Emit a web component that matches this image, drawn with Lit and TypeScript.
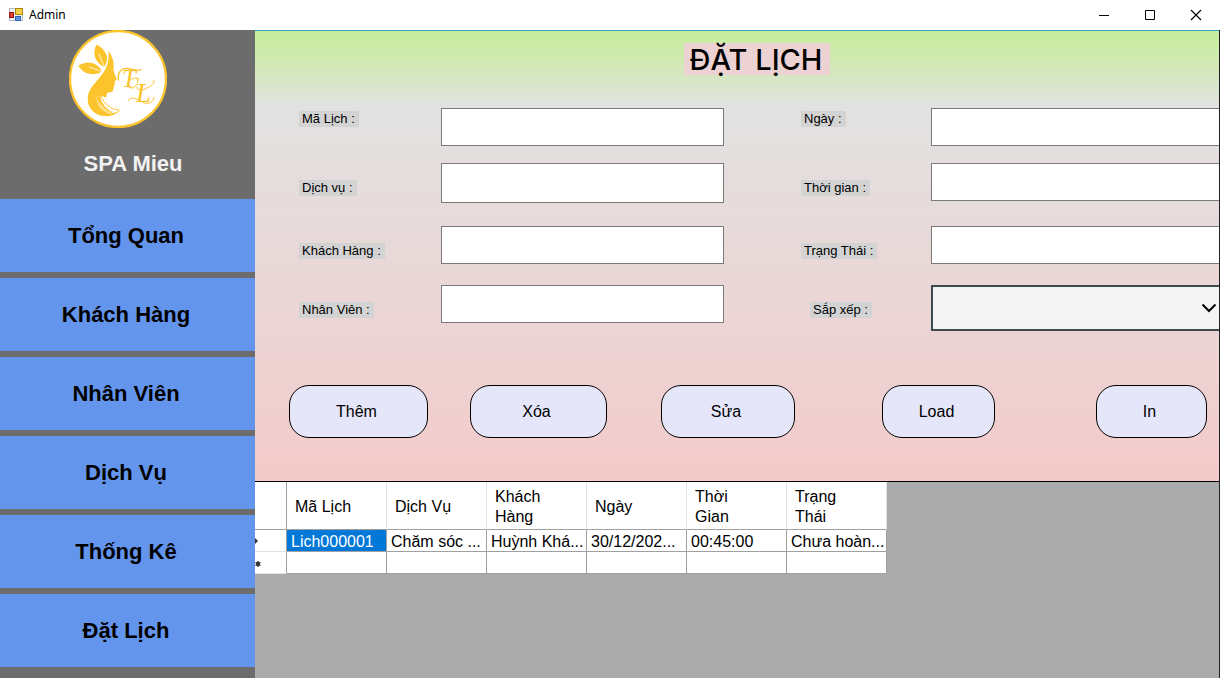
import { LitElement, html, css } from "lit";
import { customElement, state } from "lit/decorators.js";

@customElement("spa-logo")
class SpaLogo extends LitElement {
  static styles = css`
    :host { display: block; width: 98px; height: 98px; }
    svg { display: block; width: 100%; height: 100%; }
    .mono { font-family: "Liberation Serif", serif; font-style: italic; fill: #fcc42c; }
  `;
  render() {
    return html`
      <svg viewBox="0 0 98 98" role="img" aria-label="SPA Mieu logo">
        <circle cx="49" cy="49" r="48" fill="#fff" stroke="#fcc42c" stroke-width="2.4" />
        <g fill="#fcc42c">
          <path d="M27.5 14.5C23.5 22 24.5 32 35.5 37C41 29 37.5 19.5 27.5 14.5Z" />
          <path d="M9.3 36C15.5 30.5 28 30.5 33 41.5C24 47 14 43.5 9.3 36Z" />
          <path d="M39.3 20.7C43 25 45 31 44.6 36.5C44.3 40 45 42.5 46 45C47.2 47.6 48 49 47.3 50C46.6 50.7 45.8 50.8 45.6 51.5C45.8 52.6 46.3 53.2 45.4 54C46 55 45.2 55.7 44.8 56.4C44.3 58 44.7 60.4 43.4 61.4C41.8 62.6 39.6 61.8 38.4 63C37.4 64.2 37.6 66 37.2 67.6C35.2 67 33 66 31.5 65.5C31 73 38 79.5 44 82C40 82.6 34 78 30.7 73C29 70.6 28.2 67.8 28 65.6C26 72 32 81 40 83.2C44.6 84 48.6 82 51.5 79.8C47.5 85 40 87.2 33 85.8C24 84 18 77 18.8 67C19.6 57 29 51 35 41.7C39 35 40.2 28 39.3 20.7Z" />
        </g>
        <g fill="none" stroke="#fff" stroke-width="0.8">
          <path d="M38.6 26C39 33 36 38.5 31 43.5M30 24L35.5 37M20 37L33 41.5" />
        </g>
        <g fill="none" stroke="#fcc42c" stroke-width="1" stroke-linecap="round">
          <path d="M32 66C35 74 42 80 50 80M28 67C29 76 35 81 43 83" />
          <path d="M49.5 50C48 42 53 38 58 38.5C63 39 68 42 72 39.5" stroke-width="1.4" />
          <path d="M70 49C62 45 56 54 60 57.5C65 60 71 53 68 48" />
          <path d="M68 57C67 61 74 61 78 58C84 55 88 50 84 51M59 71C61 66 67 68 73 72C79 75 84 73 85 67" />
        </g>
        <text class="mono" x="53" y="57" font-size="25">T</text>
        <text class="mono" x="67" y="72" font-size="27">L</text>
      </svg>
    `;
  }
}

@customElement("app-root")
class AppRoot extends LitElement {
  @state() private nav = ["Tổng Quan", "Khách Hàng", "Nhân Viên", "Dịch Vụ", "Thống Kê", "Đặt Lịch"];
  @state() private actions = ["Thêm", "Xóa", "Sửa", "Load", "In"];
  @state() private columns = ["Mã Lịch", "Dịch Vụ", "Khách Hàng", "Ngày", "Thời Gian", "Trạng Thái"];
  @state() private row = ["Lich000001", "Chăm sóc ...", "Huỳnh Khá...", "30/12/202...", "00:45:00", "Chưa hoàn..."];

  static styles = css`
    * { box-sizing: border-box; }
    :host {
      display: flex;
      flex-direction: column;
      min-height: 100vh;
      font-family: "Liberation Sans", Arial, sans-serif;
      color: #000;
    }
    button, input, select { font: inherit; color: inherit; margin: 0; }

    .titlebar { display: flex; align-items: center; height: 30px; padding: 0 1px 0 8px; background: #fff; }
    .app-icon { width: 16px; height: 16px; margin-right: 5px; }
    .caption { flex: 1; font: 12px/16px "Noto Sans", sans-serif; }
    .win { width: 46px; height: 28px; padding: 0; border: 0; background: none; display: grid; place-items: center; }
    .win svg { width: 12px; height: 12px; }

    .body { flex: 1; display: flex; }
    .sidebar { width: 255px; flex: none; background: #6c6c6c; }
    .brand { height: 169px; display: flex; flex-direction: column; align-items: center; padding-right: 19px; }
    .brand-name { margin: 22px 0 0; padding-left: 30px; font-size: 22px; line-height: 28px; font-weight: 700; color: #f2f2f2; }
    nav { display: flex; flex-direction: column; gap: 6px; }
    .nav-item { height: 73px; border: 0; padding: 0 3px 0 0; background: #6495ed; font-size: 22px; font-weight: 700; }

    .main { flex: 1; min-width: 0; display: flex; flex-direction: column; background: #ababab; border-right: 1px solid #222; }
    .panel {
      border-top: 1px solid #3ba3b5;
      border-bottom: 1px solid #000;
      background: linear-gradient(#c7ed9c 0, #cfeaae 25px, #e1e2e1 76px, #e6dcdc 160px, #edd3d3 320px, #f4caca 100%);
      padding-bottom: 43px;
    }
    .heading { display: flex; justify-content: center; padding: 12px 0 0 40px; }
    h1 { margin: 0; padding: 2px 8px 0 6px; background: #ecd2d2; font: 500 29px/30px Inter, "Liberation Sans", sans-serif; }

    .form {
      display: grid;
      grid-template-columns: 142px minmax(0, 283fr) 77px 130px minmax(0, 288fr);
      grid-template-rows: 55px 63px 59px 46px;
      align-items: start;
      padding: 33px 0 0 44px;
    }
    label { justify-self: start; margin-top: 17px; padding: 0 4px 0 3px; background: #d3d3d3; font-size: 13px; line-height: 16px; }
    .first { margin-top: 3px; }
    .right { grid-column: 4; }
    .indent { margin-left: 9px; }
    input { width: 100%; height: 38px; border: 1px solid #7a7a7a; background: #fff; padding: 0 8px; border-radius: 0; outline: 0; }
    .tall { height: 40px; }
    .cut { border-right: 0; }
    .select-box { display: grid; align-items: center; }
    .select-box > * { grid-area: 1 / 1; }
    select { appearance: none; width: 100%; height: 46px; border: 2px solid #3b4b4b; border-right: 0; border-radius: 0; background: #f4f4f4; padding: 0 8px; }
    .chevron { justify-self: end; width: 16px; height: 10px; margin-right: 2px; pointer-events: none; }

    .actions {
      display: grid;
      grid-template-columns: 139fr 42fr 137fr 54fr 134fr 87fr 113fr 101fr 111fr;
      padding: 54px 12px 0 34px;
    }
    .action { height: 53px; border: 1px solid #000; border-radius: 20px; background: #e6e6fa; padding: 0 4px 0 0; font-size: 16px; }
    .action:nth-child(2) { grid-column: 3; }
    .action:nth-child(3) { grid-column: 5; }
    .action:nth-child(4) { grid-column: 7; }
    .action:nth-child(5) { grid-column: 9; }

    table { width: 632px; table-layout: fixed; border-collapse: separate; border-spacing: 0; background: #fff; font-size: 16px; line-height: 20px; }
    .mark-col { width: 32px; }
    th { height: 48px; padding: 2px 24px 0 8px; text-align: left; font-weight: 400; border-right: 1px solid #e2e2e2; border-bottom: 1px solid #a0a0a0; }
    td { height: 22px; padding: 2px 0 0 4px; line-height: 19px; white-space: nowrap; overflow: hidden; border-right: 1px solid #a0a0a0; border-bottom: 1px solid #a0a0a0; }
    .mark { padding: 0; border-right-color: #a0a0a0; }
    td.mark { border-bottom-color: #e2e2e2; }
    .mark svg { display: block; width: 8px; height: 10px; }
    .selected { background: #0078d7; color: #fff; }
  `;

  render() {
    return html`
      <header class="titlebar">
        <svg class="app-icon" viewBox="0 0 16 16" aria-hidden="true">
          <rect x="1.5" y="1.5" width="13" height="12" fill="#f1f3f6" stroke="#b5bac2" />
          <rect x="7.5" y="1.5" width="7" height="6" fill="#f5cf45" stroke="#a98612" />
          <rect x="1.5" y="5.5" width="4" height="5" fill="#e33b30" stroke="#8c1a18" />
          <rect x="7.5" y="9.5" width="5" height="4" fill="#5c96e8" stroke="#2f63b8" />
        </svg>
        <span class="caption">Admin</span>
        <button class="win" aria-label="Minimize"><svg viewBox="0 0 12 12"><path d="M1 6.5H11" stroke="#000" /></svg></button>
        <button class="win" aria-label="Maximize"><svg viewBox="0 0 12 12"><path d="M1.5 1.5h9v9h-9z" fill="none" stroke="#000" /></svg></button>
        <button class="win" aria-label="Close"><svg viewBox="0 0 12 12"><path d="M1 1L11 11M11 1L1 11" stroke="#000" stroke-width="1.2" /></svg></button>
      </header>
      <div class="body">
        <aside class="sidebar">
          <div class="brand">
            <spa-logo></spa-logo>
            <p class="brand-name">SPA Mieu</p>
          </div>
          <nav>${this.nav.map((n) => html`<button class="nav-item">${n}</button>`)}</nav>
        </aside>
        <main class="main">
          <section class="panel">
            <div class="heading"><h1>ĐẶT LỊCH</h1></div>
            <form class="form">
              <label class="first" for="code">Mã Lịch :</label><input id="code" />
              <label class="first right" for="date">Ngày :</label><input class="cut" id="date" />
              <label for="service">Dịch vụ :</label><input class="tall" id="service" />
              <label class="right" for="time">Thời gian :</label><input class="cut" id="time" />
              <label for="customer">Khách Hàng :</label><input id="customer" />
              <label class="right" for="status">Trạng Thái :</label><input class="cut" id="status" />
              <label for="staff">Nhân Viên :</label><input id="staff" />
              <label class="right indent" for="sort">Sắp xếp :</label>
              <div class="select-box">
                <select id="sort"><option></option></select>
                <svg class="chevron" viewBox="0 0 16 10" aria-hidden="true"><path d="M1.5 1.5L8 8L14.5 1.5" fill="none" stroke="#000" stroke-width="2" /></svg>
              </div>
            </form>
            <div class="actions">${this.actions.map((a) => html`<button class="action">${a}</button>`)}</div>
          </section>
          <table>
            <colgroup><col class="mark-col" />${this.columns.map(() => html`<col />`)}</colgroup>
            <thead>
              <tr><th class="mark"></th>${this.columns.map((c) => html`<th scope="col">${c}</th>`)}</tr>
            </thead>
            <tbody>
              <tr>
                <td class="mark"><svg viewBox="0 0 8 10"><path d="M0 2L3 5L0 8z" fill="#333" /></svg></td>
                ${this.row.map((c, i) => html`<td class=${i === 0 ? "selected" : ""}>${c}</td>`)}
              </tr>
              <tr>
                <td class="mark"><svg viewBox="0 0 8 10"><circle cx="3" cy="6" r="2.4" fill="#444" /><path d="M3 3v6M.5 4.5l5 3M.5 7.5l5-3" stroke="#333" /></svg></td>
                ${this.columns.map(() => html`<td></td>`)}
              </tr>
            </tbody>
          </table>
        </main>
      </div>
    `;
  }
}
